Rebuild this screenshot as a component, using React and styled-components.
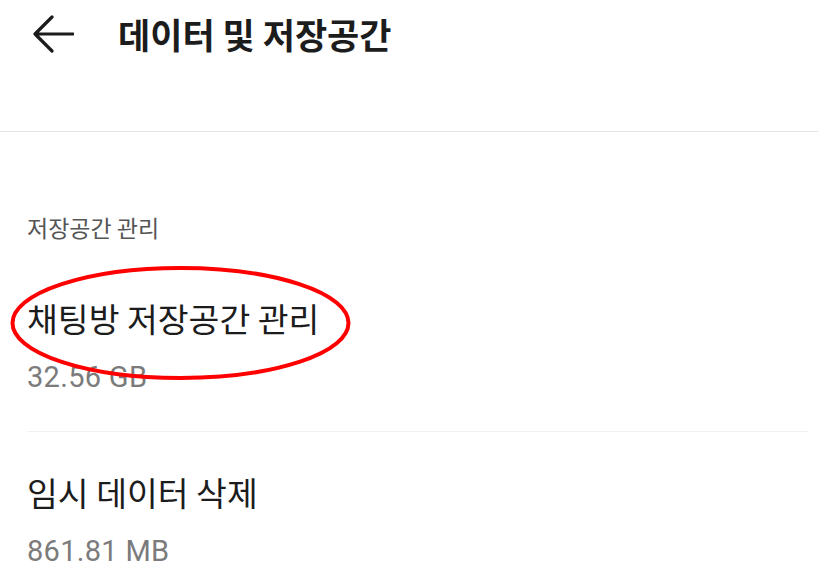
import styled, { createGlobalStyle } from "styled-components";

const GlobalStyle = createGlobalStyle`
    html, body {
        margin: 0;
        background: #ffffff;
    }

    body {
        font-family: Roboto, "Noto Sans CJK KR", sans-serif;
        color: #1c1c1c;
    }
`;

const Header = styled.header`
    height: 131px;
    border-bottom: 1px solid #e3e3e3;
`;

const TopBar = styled.div`
    display: flex;
    align-items: center;
    height: 68px;
    padding-left: 32px;
    gap: 44px;
`;

const BackButton = styled.button`
    display: flex;
    padding: 0;
    border: none;
    background: none;
    color: #1c1c1c;
`;

const Title = styled.h1`
    margin: 0;
    font-family: "Noto Sans CJK KR", sans-serif;
    font-size: 35px;
    font-weight: 700;
    line-height: 44px;
    color: #1c1c1c;
`;

const Content = styled.main`
    padding: 80px 10px 0 27px;
`;

const SectionLabel = styled.h2`
    margin: 0 0 16px;
    font-family: "Noto Sans CJK KR", sans-serif;
    font-size: 23px;
    font-weight: 400;
    line-height: 30px;
    color: #555555;
`;

const Item = styled.div`
    position: relative;
    display: flex;
    flex-direction: column;
    gap: 21px;
    padding: 40px 0 36px;
    border-bottom: ${(p) => (p.$last ? "none" : "1px solid #f1f1f1")};
`;

const ItemTitle = styled.div`
    font-family: "Noto Sans CJK KR", sans-serif;
    font-size: 33.5px;
    line-height: 40px;
    color: #1c1c1c;
`;

const ItemValue = styled.div`
    font-size: 29px;
    line-height: 36px;
    letter-spacing: 0.3px;
    color: #7b7b7b;
`;

const Mark = styled.svg`
    position: absolute;
    left: -18px;
    top: 6px;
    pointer-events: none;
`;

function App() {
    return (
        <>
            <GlobalStyle />
            <Header>
                <TopBar>
                    <BackButton aria-label="뒤로">
                        <svg width="42" height="38" viewBox="0 0 42 38" fill="none">
                            <path
                                d="M20 2 L3 19 L20 36 M3 19 H41"
                                stroke="currentColor"
                                strokeWidth="3.2"
                                strokeLinecap="round"
                                strokeLinejoin="round"
                            />
                        </svg>
                    </BackButton>
                    <Title>데이터 및 저장공간</Title>
                </TopBar>
            </Header>
            <Content>
                <SectionLabel>저장공간 관리</SectionLabel>
                <Item>
                    <ItemTitle>채팅방 저장공간 관리</ItemTitle>
                    <ItemValue>32.56 GB</ItemValue>
                    <Mark width="343" height="118" viewBox="0 0 343 118">
                        <ellipse cx="171.5" cy="59" rx="168" ry="55" fill="none" stroke="#ff0000" strokeWidth="4" />
                    </Mark>
                </Item>
                <Item $last>
                    <ItemTitle>임시 데이터 삭제</ItemTitle>
                    <ItemValue>861.81 MB</ItemValue>
                </Item>
            </Content>
        </>
    );
}

export default App;
